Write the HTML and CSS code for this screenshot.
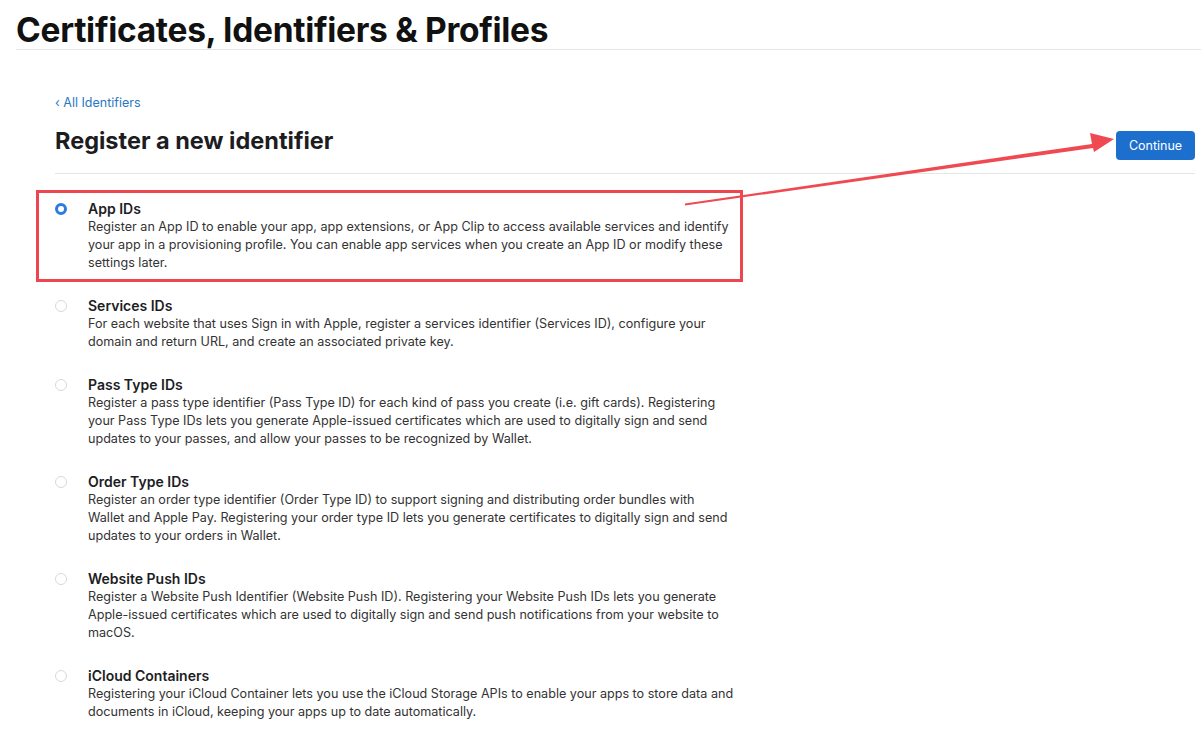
FILE: index.html
```html
<!DOCTYPE html>
<html lang="en">
<head>
<meta charset="utf-8">
<title>Register a new identifier</title>
<link rel="stylesheet" href="styles.css">
</head>
<body>
<header class="top">
  <h1 class="top-title">Certificates, Identifiers &amp; Profiles</h1>
</header>
<main class="page">
  <a class="back" href="#">‹ All Identifiers</a>
  <div class="head-row">
    <h2 class="head-title">Register a new identifier</h2>
    <button class="btn-continue" type="button">Continue</button>
  </div>
  <ul class="options">
    <li class="option selected">
      <span class="radio on"></span>
      <div class="option-body">
        <div class="option-title">App IDs</div>
        <p class="option-desc">Register an App ID to enable your app, app extensions, or App Clip to access available services and identify your app in a provisioning profile. You can enable app services when you create an App ID or modify these settings later.</p>
      </div>
    </li>
    <li class="option">
      <span class="radio"></span>
      <div class="option-body">
        <div class="option-title">Services IDs</div>
        <p class="option-desc">For each website that uses Sign in with Apple, register a services identifier (Services ID), configure your domain and return URL, and create an associated private key.</p>
      </div>
    </li>
    <li class="option">
      <span class="radio"></span>
      <div class="option-body">
        <div class="option-title">Pass Type IDs</div>
        <p class="option-desc">Register a pass type identifier (Pass Type ID) for each kind of pass you create (i.e. gift cards). Registering your Pass Type IDs lets you generate Apple-issued certificates which are used to digitally sign and send updates to your passes, and allow your passes to be recognized by Wallet.</p>
      </div>
    </li>
    <li class="option">
      <span class="radio"></span>
      <div class="option-body">
        <div class="option-title">Order Type IDs</div>
        <p class="option-desc">Register an order type identifier (Order Type ID) to support signing and distributing order bundles with<br>Wallet and Apple Pay. Registering your order type ID lets you generate certificates to digitally sign and send updates to your orders in Wallet.</p>
      </div>
    </li>
    <li class="option">
      <span class="radio"></span>
      <div class="option-body">
        <div class="option-title">Website Push IDs</div>
        <p class="option-desc">Register a Website Push Identifier (Website Push ID). Registering your Website Push IDs lets you generate Apple-issued certificates which are used to digitally sign and send push notifications from your website to macOS.</p>
      </div>
    </li>
    <li class="option">
      <span class="radio"></span>
      <div class="option-body">
        <div class="option-title">iCloud Containers</div>
        <p class="option-desc">Registering your iCloud Container lets you use the iCloud Storage APIs to enable your apps to store data and documents in iCloud, keeping your apps up to date automatically.</p>
      </div>
    </li>
  </ul>
</main>
<div class="highlight-box"></div>
<svg class="annot-arrow" width="1201" height="730" viewBox="0 0 1201 730">
  <polygon points="685,203.5 1092,144 1090,133 1114,139 1094,152 1093,148 685,205.5" fill="#ef4a52"/>
</svg>
</body>
</html>
```
FILE: styles.css
```css
* { box-sizing: border-box; }
html, body { margin: 0; padding: 0; background: #fff; }
body {
  font-family: Inter, "Noto Sans", "Liberation Sans", sans-serif;
  color: #1d1d1f;
  position: relative;
  width: 1201px;
  height: 730px;
  overflow: hidden;
}
.top {
  margin-left: 16px;
  border-bottom: 1px solid #e6e6e8;
  height: 50px;
}
.top-title {
  margin: 0;
  padding-top: 10px;
  font-size: 33.5px;
  line-height: 40px;
  font-weight: 700;
  letter-spacing: -0.3px;
  color: #111;
}
.page {
  padding: 45px 6px 0 55px;
}
.back {
  display: block;
  font-size: 12.5px;
  line-height: 16px;
  color: #2a77c4;
  text-decoration: none;
}
.head-row {
  display: flex;
  justify-content: space-between;
  align-items: center;
  border-bottom: 1px solid #e6e6e8;
  padding: 12px 0;
  height: 63px;
}
.head-title {
  margin: -2px 0 0 0;
  font-size: 23.5px;
  line-height: 28px;
  font-weight: 700;
  color: #1d1d1f;
}
.btn-continue {
  font-family: inherit;
  background: #1d6fce;
  color: #fff;
  border: 0;
  border-radius: 4px;
  font-size: 12.5px;
  width: 79px;
  height: 29px;
  padding: 0;
  margin-top: 6px;
}
.options {
  list-style: none;
  margin: 0;
  padding: 25px 0 0 0;
}
.option {
  display: flex;
  align-items: flex-start;
  margin-bottom: 24px;
}
.radio {
  flex: none;
  width: 12px;
  height: 12px;
  border-radius: 50%;
  border: 1px solid #d9d9dc;
  margin: 4px 21px 0 0;
  background: #fff;
}
.radio.on {
  border: 3.5px solid #2d7be0;
}
.option-body { width: 655px; }
.option-title {
  font-size: 14px;
  line-height: 19px;
  font-weight: 600;
  color: #1d1d1f;
}
.option-desc {
  margin: 0;
  font-size: 12.6px;
  line-height: 18px;
  color: #333;
}
.highlight-box {
  position: absolute;
  left: 36px;
  top: 190px;
  width: 707px;
  height: 92px;
  border: 3px solid #ee4650;
  pointer-events: none;
}
.annot-arrow {
  position: absolute;
  left: 0;
  top: 0;
  pointer-events: none;
}
```
